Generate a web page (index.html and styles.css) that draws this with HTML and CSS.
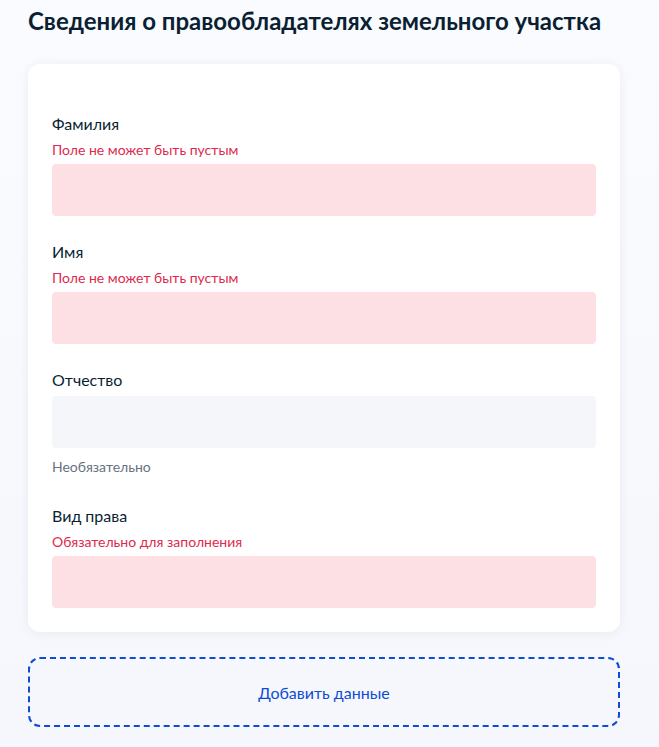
FILE: index.html
```html
<!DOCTYPE html>
<html lang="ru">
<head>
    <meta charset="UTF-8">
    <meta name="viewport" content="width=device-width, initial-scale=1.0">
    <title>Сведения о правообладателях</title>
    <link rel="stylesheet" href="styles.css">
</head>
<body>
    <div class="page">
        <h1 class="title">Сведения о правообладателях земельного участка</h1>

        <div class="card">
            <div class="field">
                <label class="label" for="last-name">Фамилия</label>
                <div class="error">Поле не может быть пустым</div>
                <input class="input input-error" type="text" id="last-name">
            </div>

            <div class="field">
                <label class="label" for="first-name">Имя</label>
                <div class="error">Поле не может быть пустым</div>
                <input class="input input-error" type="text" id="first-name">
            </div>

            <div class="field">
                <label class="label" for="middle-name">Отчество</label>
                <input class="input" type="text" id="middle-name">
                <div class="hint">Необязательно</div>
            </div>

            <div class="field">
                <label class="label" for="right-type">Вид права</label>
                <div class="error">Обязательно для заполнения</div>
                <input class="input input-error" type="text" id="right-type">
            </div>
        </div>

        <button class="add-button" type="button">Добавить данные</button>
    </div>
</body>
</html>
```

FILE: styles.css
```css
body {
    margin: 0;
    padding: 0;
    font-family: Lato, "Noto Sans", sans-serif;
    background: linear-gradient(#f9fbfe, #f5f7fc);
    color: #0b1f33;
    min-height: 747px;
}

.page {
    padding: 0 39px 0 28px;
}

.title {
    margin: 6px 0 28px;
    font-size: 24px;
    line-height: 30px;
    font-weight: 700;
}

.card {
    background-color: #fff;
    border-radius: 12px;
    padding: 48px 24px 24px;
    box-shadow: 0 1px 12px rgba(11, 31, 51, 0.06);
    display: flex;
    flex-direction: column;
    gap: 24px;
}

.field {
    display: flex;
    flex-direction: column;
}

.label {
    font-size: 16px;
    line-height: 24px;
    margin-bottom: 4px;
}

.error {
    font-size: 14px;
    line-height: 20px;
    color: #dd2a4d;
    margin-bottom: 4px;
}

.hint {
    font-size: 14px;
    line-height: 20px;
    color: #66727f;
    margin-top: 9px;
    margin-bottom: 3px;
}

.input {
    height: 52px;
    border: none;
    border-radius: 4px;
    background-color: #f5f6fa;
    padding: 0 16px;
    box-sizing: border-box;
    font-family: inherit;
    font-size: 16px;
}

.input-error {
    background-color: #fde0e3;
}

.add-button {
    display: block;
    width: 100%;
    height: 70px;
    margin-top: 25px;
    border: 2px dashed #0d4cd3;
    border-radius: 12px;
    background: transparent;
    color: #0d4cd3;
    font-family: inherit;
    font-size: 16px;
    cursor: pointer;
}
```
